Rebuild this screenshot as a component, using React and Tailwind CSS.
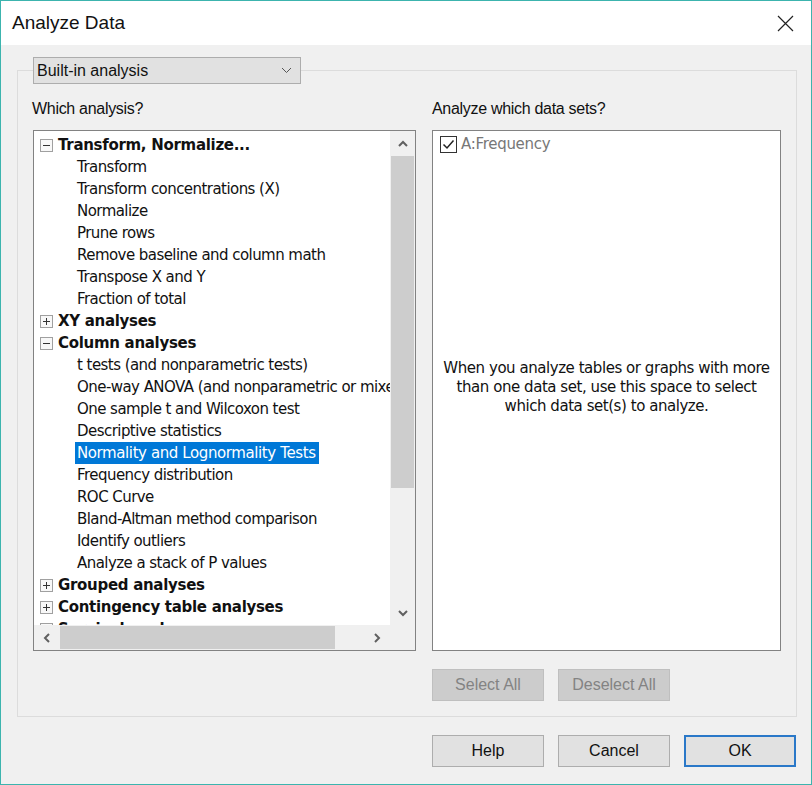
import React from "react";

const tree = [
  { t: "Transform, Normalize...", h: true, open: true },
  { t: "Transform" },
  { t: "Transform concentrations (X)" },
  { t: "Normalize" },
  { t: "Prune rows" },
  { t: "Remove baseline and column math" },
  { t: "Transpose X and Y" },
  { t: "Fraction of total" },
  { t: "XY analyses", h: true, open: false },
  { t: "Column analyses", h: true, open: true },
  { t: "t tests (and nonparametric tests)" },
  { t: "One-way ANOVA (and nonparametric or mixed)" },
  { t: "One sample t and Wilcoxon test" },
  { t: "Descriptive statistics" },
  { t: "Normality and Lognormality Tests", sel: true },
  { t: "Frequency distribution" },
  { t: "ROC Curve" },
  { t: "Bland-Altman method comparison" },
  { t: "Identify outliers" },
  { t: "Analyze a stack of P values" },
  { t: "Grouped analyses", h: true, open: false },
  { t: "Contingency table analyses", h: true, open: false },
  { t: "Survival analyses", h: true, open: false },
];

function Expander({ open }) {
  return (
    <svg width="13" height="13" viewBox="0 0 13 13" className="shrink-0">
      <rect x="0.5" y="0.5" width="12" height="12" fill="#f8f8f8" stroke="#a0a0a0" />
      <line x1="3" y1="6.5" x2="10" y2="6.5" stroke="#333" />
      {!open && <line x1="6.5" y1="3" x2="6.5" y2="10" stroke="#333" />}
    </svg>
  );
}

function Chev({ dir }) {
  const paths = {
    up: "M2 8 L6 4 L10 8",
    down: "M2 4 L6 8 L10 4",
    left: "M8 2 L4 6 L8 10",
    right: "M4 2 L8 6 L4 10",
  };
  return (
    <svg width="12" height="12" viewBox="0 0 12 12">
      <path d={paths[dir]} fill="none" stroke="#606060" strokeWidth="2" />
    </svg>
  );
}

function Btn({ children, disabled, def }) {
  return (
    <button
      className={
        "w-[112px] h-[32px] flex items-center justify-center text-[16px] " +
        (disabled
          ? "bg-[#cccccc] border border-[#bfbfbf] text-[#838383]"
          : def
          ? "bg-[#e1e1e1] border-2 border-[#2a78c8] text-[#111]"
          : "bg-[#e1e1e1] border border-[#adadad] text-[#111]")
      }
    >
      {children}
    </button>
  );
}

export default function App() {
  return (
    <div
      className="w-[812px] h-[785px] border border-[#3cb4ae] bg-[#f0f0f0] flex flex-col overflow-hidden"
      style={{ fontFamily: '"Liberation Sans", Arial, sans-serif' }}
    >
      {/* title bar */}
      <div className="h-[44px] bg-white flex items-center justify-between pl-[11px] pr-[17px] shrink-0">
        <span className="text-[19px] text-[#111]">Analyze Data</span>
        <svg width="17" height="17" viewBox="0 0 17 17">
          <path d="M1 1 L16 16 M16 1 L1 16" stroke="#222" strokeWidth="1.2" />
        </svg>
      </div>

      {/* group box */}
      <fieldset className="ml-[16px] mt-[12px] w-[780px] h-[660px] border border-[#dcdcdc] pl-[15px] pr-[15px] pb-0 pt-0 m-0">
        <legend className="p-0">
          <div className="w-[268px] h-[27px] bg-[#e1e1e1] border border-[#adadad] flex items-center justify-between pl-[3px] pr-[8px]">
            <span className="text-[16px] text-[#111]">Built-in analysis</span>
            <svg width="11" height="7" viewBox="0 0 11 7">
              <path d="M1 1 L5.5 5.5 L10 1" fill="none" stroke="#555" strokeWidth="1" />
            </svg>
          </div>
        </legend>

        <div className="flex gap-[16px] mt-[15px]">
          {/* left column */}
          <div className="w-[383px] flex flex-col">
            <div className="text-[16px] text-[#111] h-[20px] leading-[20px] -ml-[1px] tracking-[-0.3px]">Which analysis?</div>
            <div className="mt-[11px] h-[521px] border border-[#828282] bg-white flex flex-col">
              <div className="flex flex-1 min-h-0">
                <div
                  className="flex-1 overflow-hidden pt-[3px]"
                  style={{ fontFamily: '"DejaVu Sans", Verdana, sans-serif' }}
                >
                  {tree.map((r, i) => (
                    <div key={i} className="h-[22px] flex items-center whitespace-nowrap">
                      {r.h ? (
                        <div className="flex items-center pl-[6px] gap-[5px]">
                          <Expander open={r.open} />
                          <span className="text-[15px] font-bold text-[#111] tracking-[-0.3px]">{r.t}</span>
                        </div>
                      ) : (
                        <div className="pl-[41px]">
                          <span
                            className={
                              "text-[15px] px-[2px] py-[2px] " +
                              (r.sel
                                ? "bg-[#0078d7] text-white tracking-[-0.4px] pr-[3px]"
                                : "text-[#111] tracking-[-0.55px]")
                            }
                          >
                            {r.t}
                          </span>
                        </div>
                      )}
                    </div>
                  ))}
                </div>
                {/* vertical scrollbar */}
                <div className="w-[25px] bg-[#f0f0f0] flex flex-col items-center">
                  <div className="h-[25px] flex items-center justify-center">
                    <Chev dir="up" />
                  </div>
                  <div className="w-[25px] px-[1px] h-[332px]">
                    <div className="w-full h-full bg-[#cdcdcd]" />
                  </div>
                  <div className="flex-1" />
                  <div className="h-[25px] flex items-center justify-center">
                    <Chev dir="down" />
                  </div>
                </div>
              </div>
              {/* horizontal scrollbar */}
              <div className="h-[25px] flex bg-[#f0f0f0] shrink-0">
                <div className="w-[26px] flex items-center justify-center">
                  <Chev dir="left" />
                </div>
                <div className="flex-1 flex items-center">
                  <div className="w-[275px] h-[23px] bg-[#cdcdcd]" />
                </div>
                <div className="w-[26px] flex items-center justify-center">
                  <Chev dir="right" />
                </div>
                <div className="w-[25px] bg-[#f0f0f0]" />
              </div>
            </div>
          </div>

          {/* right column */}
          <div className="w-[349px] flex flex-col">
            <div className="text-[16px] text-[#111] h-[20px] leading-[20px] tracking-[-0.3px]">Analyze which data sets?</div>
            <div className="mt-[11px] h-[521px] border border-[#828282] bg-white flex flex-col relative">
              <div className="flex items-center gap-[4px] pl-[7px] pt-[3px]">
                <div className="w-[17px] h-[17px] border-[1.5px] border-[#333] flex items-center justify-center">
                  <svg width="13" height="11" viewBox="0 0 13 11">
                    <path d="M1.5 5.5 L5 9 L11.5 1.5" fill="none" stroke="#222" strokeWidth="1.5" />
                  </svg>
                </div>
                <span
                  className="text-[#777] tracking-[-0.3px] -mt-[1px]"
                  style={{ fontFamily: '"DejaVu Sans", Verdana, sans-serif', fontSize: "15px" }}
                >
                  A:Frequency
                </span>
              </div>
              <div className="flex-1 flex items-center justify-center pb-[30px]">
                <p
                  className="text-center text-[15px] leading-[19px] text-[#111] tracking-[-0.45px] w-[340px]"
                  style={{ fontFamily: '"DejaVu Sans", Verdana, sans-serif' }}
                >
                  When you analyze tables or graphs with more than one data set, use this space to select which data set(s) to analyze.
                </p>
              </div>
            </div>
            <div className="flex gap-[14px] mt-[18px]">
              <Btn disabled>Select All</Btn>
              <Btn disabled>Deselect All</Btn>
            </div>
          </div>
        </div>
      </fieldset>

      {/* bottom buttons */}
      <div className="flex gap-[14px] pl-[431px] mt-[18px]">
        <Btn>Help</Btn>
        <Btn>Cancel</Btn>
        <Btn def>OK</Btn>
      </div>
    </div>
  );
}
